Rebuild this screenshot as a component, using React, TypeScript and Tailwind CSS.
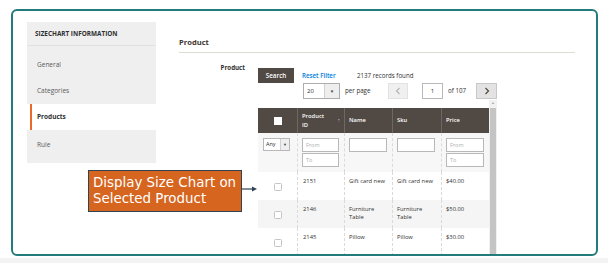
import React from "react";

const rows = [
  { id: "2151", name: ["Gift card new"], sku: ["Gift card new"], price: "$40.00" },
  { id: "2146", name: ["Furniture", "Table"], sku: ["Furniture", "Table"], price: "$50.00" },
  { id: "2145", name: ["Pillow"], sku: ["Pillow"], price: "$30.00" },
];

const Chevron = ({ dir, color }: { dir: "left" | "right"; color: string }) => (
  <svg width="6" height="8" viewBox="0 0 6 8">
    <path
      d={dir === "left" ? "M4.5 1 L1.5 4 L4.5 7" : "M1.5 1 L4.5 4 L1.5 7"}
      fill="none"
      stroke={color}
      strokeWidth="1.2"
    />
  </svg>
);

const Input = ({ ph, className = "" }: { ph?: string; className?: string }) => (
  <div
    className={`h-[14px] border border-[#b8b8b8] bg-white pl-[3px] flex items-center text-[5.5px] text-[#b0b0b0] ${className}`}
  >
    {ph}
  </div>
);

const Checkbox = () => (
  <div className="w-[8px] h-[8px] rounded-[1.5px] border border-[#c4c4c4] bg-white" />
);

export default function App() {
  return (
    <div
      className="w-[608px] h-[263px] bg-white relative overflow-hidden pt-[9px] pl-[11px]"
      style={{ fontFamily: "'Open Sans', 'Liberation Sans', sans-serif" }}
    >
      <div className="w-[587px] h-[247px] border-2 border-[#237b7b] rounded-[6px] overflow-hidden flex items-start pt-[11px] pl-[14px] bg-white">
        {/* SIDEBAR */}
        <div className="w-[129px] shrink-0 flex flex-col bg-[#efefef]">
          <div className="h-[24px] border-b border-[#e2e2e2] flex items-center pl-[8px] pt-[1px] text-[6.4px] font-bold text-[#303030]">
            SIZECHART INFORMATION
          </div>
          <div className="h-[31px] pt-[6px] flex items-center pl-[10px] text-[6.5px] text-[#5a5a5a]">
            General
          </div>
          <div className="h-[27px] flex items-center pl-[10px] text-[6.5px] text-[#5a5a5a]">
            Categories
          </div>
          <div className="h-[26px] bg-white pl-[3px] flex">
            <div className="flex-1 border-l-2 border-[#e8692a] flex items-center pl-[5px] text-[6.5px] font-bold text-[#303030]">
              Products
            </div>
          </div>
          <div className="h-[33px] pt-[10px] pl-[10px] text-[6.5px] leading-[10px] text-[#5a5a5a]">
            Rule
          </div>
        </div>

        {/* MAIN */}
        <div className="flex-1 pl-[23px] flex flex-col">
          <div className="w-[396px] h-[31px] flex items-end pb-[4px] border-b border-[#dedbd3] text-[7.6px] leading-[12px] font-bold text-[#41362f]">
            Product
          </div>

          <div className="flex mt-[9px]">
            <div className="w-[66px] text-right text-[6.2px] leading-[12px] font-bold text-[#303030]">
              Product
            </div>
            <div className="ml-[13px] flex flex-col">
              {/* Row A */}
              <div className="mt-[6px] h-[15px] flex items-center">
                <div className="w-[36px] h-[15px] bg-[#514943] text-white text-[6.3px] font-semibold flex items-center justify-center">
                  Search
                </div>
                <div className="w-[63px] pl-[8px] text-[6.2px] font-semibold text-[#007bdb]">
                  Reset Filter
                </div>
                <div className="text-[6.2px] text-[#303030]">2137 records found</div>
              </div>
              {/* Row B */}
              <div className="h-[16px] flex items-center pl-[45px]">
                <div className="w-[37px] h-[16px] border border-[#adadad] bg-white flex">
                  <div className="flex-1 pl-[3px] flex items-center text-[6px] text-[#303030]">20</div>
                  <div className="w-[15px] bg-[#eeeeee] border-l border-[#d0d0d0] flex items-center justify-center text-[4.5px] text-[#444]">
                    ▼
                  </div>
                </div>
                <div className="w-[48px] pl-[5px] text-[6.2px] text-[#303030]">per page</div>
                <div className="w-[20px] h-[16px] bg-[#f0f0f0] border border-[#e2e2e2] flex items-center justify-center">
                  <Chevron dir="left" color="#b5b5b5" />
                </div>
                <div className="ml-[14px] w-[21px] h-[16px] border border-[#b8b8b8] bg-white flex items-center justify-center text-[6px] text-[#303030]">
                  1
                </div>
                <div className="w-[33px] pl-[5px] text-[6.2px] text-[#303030]">of 107</div>
                <div className="w-[21px] h-[16px] bg-[#e3e3e3] border border-[#c8c8c8] flex items-center justify-center">
                  <Chevron dir="right" color="#514943" />
                </div>
              </div>

              {/* Table */}
              <div className="mt-[1px] flex">
                <div className="w-[231px] pt-[8px]">
                  <div className="flex h-[25px] bg-[#514943] text-white text-[5.8px] font-semibold">
                    <div className="w-[39px] flex items-center justify-center">
                      <div className="w-[8px] h-[8px] bg-white" />
                    </div>
                    <div className="w-[47px] border-l border-[#6f6762] pl-[4px] flex items-center justify-between pr-[4px] leading-[9px]">
                      <span>
                        Product
                        <br />
                        ID
                      </span>
                      <span className="text-[5px] text-[#cfc9c4]">↑</span>
                    </div>
                    <div className="w-[48px] border-l border-[#6f6762] pl-[4px] flex items-center">Name</div>
                    <div className="w-[49px] border-l border-[#6f6762] pl-[4px] flex items-center">Sku</div>
                    <div className="w-[47px] border-l border-[#6f6762] pl-[4px] flex items-center">Price</div>
                  </div>

                  {/* Filters */}
                  <div className="flex h-[39px] bg-[#f7f7f7]">
                    <div className="w-[39px] pt-[5px] pl-[5px]">
                      <div className="w-[27px] h-[13px] border border-[#b8b8b8] bg-white flex">
                        <div className="flex-1 pl-[2px] flex items-center text-[5.5px] text-[#303030]">Any</div>
                        <div className="w-[9px] bg-[#eeeeee] border-l border-[#d0d0d0] flex items-center justify-center text-[4px] text-[#444]">
                          ▼
                        </div>
                      </div>
                    </div>
                    <div className="w-[47px] border-l border-dashed border-[#dadada] pt-[5px] pl-[4px] pr-[5px] flex flex-col gap-[1px]">
                      <Input ph="From" />
                      <Input ph="To" />
                    </div>
                    <div className="w-[48px] border-l border-dashed border-[#dadada] pt-[5px] pl-[4px] pr-[5px]">
                      <Input />
                    </div>
                    <div className="w-[49px] border-l border-dashed border-[#dadada] pt-[5px] pl-[4px] pr-[6px]">
                      <Input />
                    </div>
                    <div className="w-[47px] border-l border-dashed border-[#dadada] pt-[5px] pl-[4px] pr-[4px] flex flex-col gap-[1px]">
                      <Input ph="From" />
                      <Input ph="To" />
                    </div>
                  </div>

                  {/* Rows */}
                  {rows.map((r, i) => (
                    <div
                      key={r.id}
                      className={`flex h-[28px] text-[5.8px] leading-[8px] text-[#303030] ${
                        i % 2 === 1 ? "bg-[#f5f5f5]" : "bg-white"
                      }`}
                    >
                      <div className="w-[39px] flex items-center justify-center pt-[1px]">
                        <Checkbox />
                      </div>
                      <div className="w-[47px] border-l border-dashed border-[#dadada] pl-[5px] pt-[5px]">{r.id}</div>
                      <div className="w-[48px] border-l border-dashed border-[#dadada] pl-[4px] pt-[5px]">
                        {r.name.map((n) => (
                          <div key={n}>{n}</div>
                        ))}
                      </div>
                      <div className="w-[49px] border-l border-dashed border-[#dadada] pl-[4px] pt-[5px]">
                        {r.sku.map((n) => (
                          <div key={n}>{n}</div>
                        ))}
                      </div>
                      <div className="w-[47px] border-l border-dashed border-[#dadada] pl-[4px] pt-[5px]">{r.price}</div>
                    </div>
                  ))}
                </div>

                {/* Scrollbar */}
                <div className="w-[8px] bg-[#f1f1f1] flex flex-col items-center">
                  <div className="h-[6px] flex items-center text-[3.5px] text-[#a0a0a0]">▲</div>
                  <div className="w-[6px] flex-1 bg-[#c4c4c4] mt-[2px]" />
                </div>
              </div>
            </div>
          </div>
        </div>
      </div>

      {/* Bottom strip */}
      <div className="absolute left-0 right-0 bottom-0 h-[5px] bg-[#f3f3f3]" />

      {/* CALLOUT */}
      <div className="absolute left-[88px] top-[170px] flex items-center">
        <div
          className="w-[154px] h-[42px] bg-[#d6651f] border border-[#2f4450] text-white text-[13.4px] leading-[16px] flex items-center pl-[4px]"
          style={{ fontFamily: "'DejaVu Sans', sans-serif" }}
        >
          <span>
            Display Size Chart on
            <br />
            Selected Product
          </span>
        </div>
        <svg width="16" height="8" viewBox="0 0 16 8" className="-mt-[5px]">
          <line x1="0" y1="4" x2="12" y2="4" stroke="#2f4450" strokeWidth="1.2" />
          <path d="M10 1.5 L15 4 L10 6.5 Z" fill="#2f4450" />
        </svg>
      </div>
    </div>
  );
}
